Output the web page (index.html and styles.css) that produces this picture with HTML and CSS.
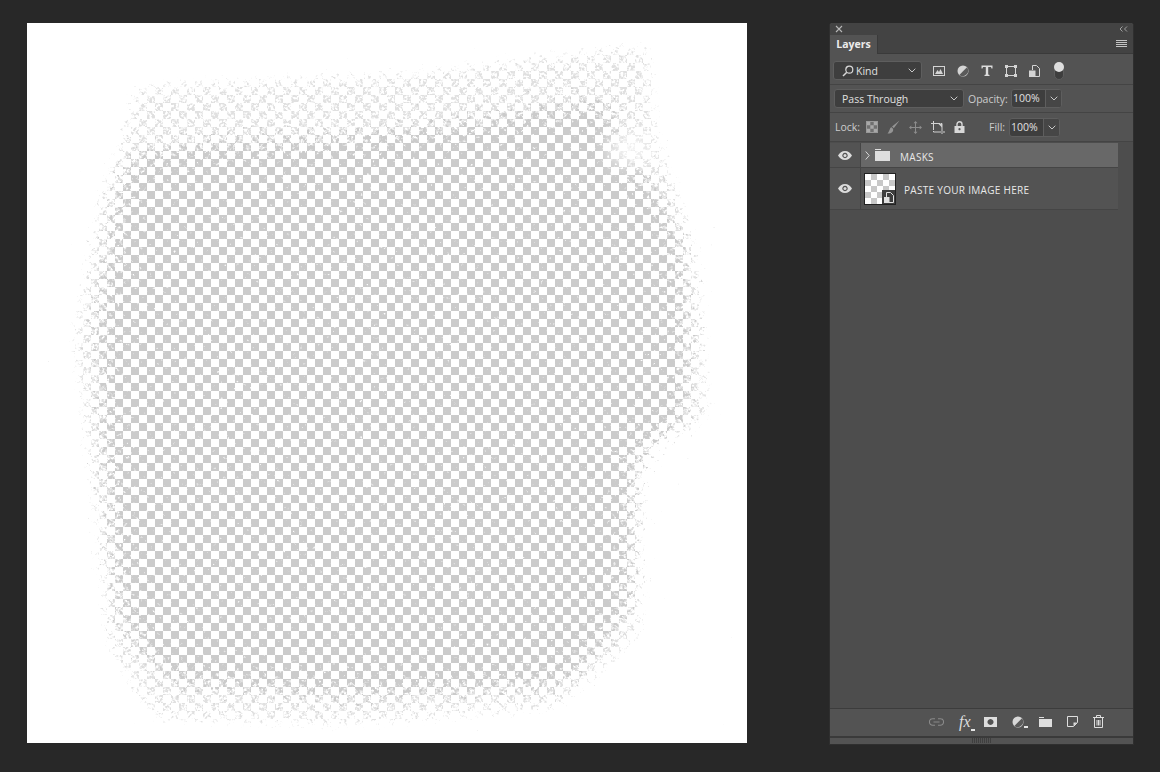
FILE: index.html
```html
<!DOCTYPE html>
<html lang="en">
<head>
    <meta charset="UTF-8">
    <title>Layers</title>
    <link rel="stylesheet" href="styles.css">
</head>
<body>

<div class="workspace">
    <svg class="artboard" width="720" height="720" viewBox="27 23 720 720">
        <defs>
            <pattern id="checker" x="27" y="23" width="16" height="16" patternUnits="userSpaceOnUse">
                <rect x="0" y="0" width="8" height="8" fill="#cbcbcb"/>
                <rect x="8" y="8" width="8" height="8" fill="#cbcbcb"/>
            </pattern>
            <filter id="rough" filterUnits="userSpaceOnUse" x="27" y="23" width="720" height="720" color-interpolation-filters="sRGB">
                <feGaussianBlur in="SourceGraphic" stdDeviation="20" result="soft"/>
                <feTurbulence type="fractalNoise" baseFrequency="0.3" numOctaves="2" seed="7"/>
                <feColorMatrix values="0 0 0 0 1  0 0 0 0 1  0 0 0 0 1  1 0 0 0 0" result="noise"/>
                <feComposite in="soft" in2="noise" operator="arithmetic" k1="0" k2="1" k3="1.4" k4="-0.95"/>
                <feComponentTransfer>
                    <feFuncA type="linear" slope="4" intercept="-1"/>
                </feComponentTransfer>
            </filter>
            <filter id="speck" filterUnits="userSpaceOnUse" x="27" y="23" width="720" height="720" color-interpolation-filters="sRGB">
                <feGaussianBlur in="SourceGraphic" stdDeviation="13" result="soft"/>
                <feTurbulence type="fractalNoise" baseFrequency="0.38" numOctaves="2" seed="21"/>
                <feColorMatrix values="0 0 0 0 1  0 0 0 0 1  0 0 0 0 1  1 0 0 0 0" result="noise"/>
                <feComposite in="soft" in2="noise" operator="arithmetic" k1="1" k2="0" k3="0" k4="0"/>
                <feComponentTransfer>
                    <feFuncA type="linear" slope="5" intercept="-1.900"/>
                </feComponentTransfer>
            </filter>
            <filter id="fade" filterUnits="userSpaceOnUse" x="27" y="23" width="720" height="720">
                <feGaussianBlur stdDeviation="9"/>
            </filter>
            <mask id="scrape" maskUnits="userSpaceOnUse" x="27" y="23" width="720" height="720">
                <polygon filter="url(#speck)" fill="#fff" opacity=".6" points="128,78 400,66 655,36 664,140 686,190 706,270 716,428 650,448 646,640 560,715 350,732 150,726 102,650 80,440 66,340 92,200 112,150"/>
                <polygon filter="url(#rough)" fill="#fff" points="112,205 128,146 400,128 618,95 618,150 660,182 686,250 692,424 636,450 632,614 566,688 350,700 165,684 118,625 102,450 94,330"/>
                <ellipse filter="url(#fade)" cx="628" cy="150" rx="20" ry="14" fill="#000" fill-opacity=".8"/>
            </mask>
        </defs>
        <rect x="27" y="23" width="720" height="720" fill="#fff"/>
        <rect x="27" y="23" width="720" height="720" fill="url(#checker)" mask="url(#scrape)"/>
    </svg>

    <div class="panel">
        <div class="panel-top">
            <svg class="top-icon" width="8" height="8" viewBox="0 0 8 8"><path d="M1 1l6 6M7 1L1 7" stroke="#b8b8b8" stroke-width="1.100" fill="none"/></svg>
            <svg class="top-icon" width="9" height="6" viewBox="0 0 9 6"><path d="M3.500 .5L1 3l2.500 2.500M8 .5L5.500 3 8 5.500" stroke="#a0a0a0" fill="none"/></svg>
        </div>
        <div class="tab-bar">
            <div class="tab">Layers</div>
            <svg class="menu-icon" width="11" height="8" viewBox="0 0 11 8"><path d="M0 .5h11M0 2.500h11M0 4.500h11M0 6.500h11" stroke="#c4c4c4"/></svg>
        </div>

        <div class="tool-row filter-row">
            <div class="select kind-select">
                <svg width="12" height="12" viewBox="0 0 12 12"><circle cx="7.300" cy="4.700" r="3.500" fill="none" stroke="#d8d8d8" stroke-width="1.200"/><path d="M4.800 7.200L1 11" stroke="#d8d8d8" stroke-width="1.500"/></svg>
                <span>Kind</span>
                <svg class="caret" width="8" height="5" viewBox="0 0 8 5"><path d="M.7 .7L4 4l3.300-3.300" fill="none" stroke="#c8c8c8"/></svg>
            </div>
            <div class="filter-icons">
                <svg width="12" height="10" viewBox="0 0 12 10"><rect x=".5" y=".5" width="11" height="9" fill="none" stroke="#d4d4d4"/><path d="M2 8l2.500-4 1.500 2 1.500-3L10 8z" fill="#d4d4d4"/></svg>
                <svg width="12" height="12" viewBox="0 0 12 12"><circle cx="6" cy="6" r="5.500" fill="#d4d4d4"/><path d="M10 2.300A5.500 5.500 0 0 1 2.300 10z" fill="#5a5a5a"/></svg>
                <svg width="12" height="11" viewBox="0 0 12 11"><path d="M.5 .5h11v3h-1L10 2H7.200v7.500l1.300.5v1h-5v-1l1.300-.5V2H2l-.5 1.500h-1z" fill="#dcdcdc"/></svg>
                <svg width="12" height="12" viewBox="0 0 12 12"><rect x="1.500" y="1.500" width="9" height="9" fill="none" stroke="#d4d4d4"/><path d="M0 0h3v3H0zM9 0h3v3H9zM0 9h3v3H0zM9 9h3v3H9z" fill="#d4d4d4"/></svg>
                <svg width="11" height="12" viewBox="0 0 11 12"><path d="M3.500 5V.5h4l3 3v8H5" fill="none" stroke="#d4d4d4"/><rect x="0" y="5.500" width="6.500" height="6.500" fill="#d4d4d4"/></svg>
            </div>
            <div class="switch"><div class="switch-dot"></div></div>
        </div>

        <div class="tool-row blend-row">
            <div class="select blend-select">
                <span>Pass Through</span>
                <svg class="caret" width="8" height="5" viewBox="0 0 8 5"><path d="M.7 .7L4 4l3.300-3.300" fill="none" stroke="#c8c8c8"/></svg>
            </div>
            <label class="field-label opacity-label">Opacity:</label>
            <div class="number-field">
                <span class="number">100%</span>
                <span class="number-btn"><svg width="8" height="5" viewBox="0 0 8 5"><path d="M.7 .7L4 4l3.300-3.300" fill="none" stroke="#c8c8c8"/></svg></span>
            </div>
        </div>

        <div class="tool-row lock-row">
            <label class="field-label lock-label">Lock:</label>
            <div class="lock-icons">
                <svg width="12" height="12" viewBox="0 0 12 12"><rect x=".5" y=".5" width="11" height="11" fill="#707070" stroke="#999"/><path d="M1 1h3.300v3.300H1zM7.700 1H11v3.300H7.700zM4.300 4.300h3.400v3.400H4.300zM1 7.700h3.300V11H1zM7.700 7.700H11V11H7.700z" fill="#a8a8a8"/></svg>
                <svg width="13" height="14" viewBox="0 0 13 14"><path d="M12.500 .5L5 6.500l1.800 1.800zM4.500 7.200c-2 .3-1.300 3.300-4 6.300 3.500 .3 6.500-1.500 5.500-4.800z" fill="#949494"/></svg>
                <svg width="13" height="13" viewBox="0 0 13 13"><path d="M6.500 1v11M1 6.500h11" stroke="#8d8d8d"/><path d="M6.500 0l2 2.300h-4zM6.500 13l2-2.300h-4zM0 6.500l2.300-2v4zM13 6.500l-2.300-2v4z" fill="#8d8d8d"/></svg>
                <svg width="14" height="13" viewBox="0 0 14 13"><path d="M2.500 0v11H14M0 2.500h11V13" fill="none" stroke="#d2d2d2" stroke-dasharray="9 1"/><path d="M7 2.500h4v4z" fill="#d2d2d2"/></svg>
                <svg width="11" height="12" viewBox="0 0 11 12"><path d="M3 5V3.300a2.500 2.500 0 0 1 5 0V5" fill="none" stroke="#d8d8d8" stroke-width="1.400"/><path fill-rule="evenodd" d="M.5 5h10v7H.5zM5.500 7a1.100 1.100 0 1 0 .01 0z" fill="#d8d8d8"/></svg>
            </div>
            <label class="field-label fill-label">Fill:</label>
            <div class="number-field">
                <span class="number">100%</span>
                <span class="number-btn"><svg width="8" height="5" viewBox="0 0 8 5"><path d="M.7 .7L4 4l3.300-3.300" fill="none" stroke="#c8c8c8"/></svg></span>
            </div>
        </div>

        <div class="layer-list">
            <div class="layer group-layer">
                <div class="eye-cell">
                    <svg width="14" height="9" viewBox="0 0 14 9"><path fill-rule="evenodd" d="M7 0c3 0 5.500 2 7 4.500C12.500 7 10 9 7 9S1.500 7 0 4.500C1.500 2 4 0 7 0zm0 1.800a2.700 2.700 0 1 0 .01 0z" fill="#dcdcdc"/><circle cx="7" cy="4.500" r="1.500" fill="#dcdcdc"/></svg>
                </div>
                <div class="layer-body group-body">
                    <svg class="twisty" width="5" height="9" viewBox="0 0 5 9"><path d="M.7 .5l3.500 4-3.500 4" fill="none" stroke="#dadada"/></svg>
                    <svg class="folder" width="15" height="12" viewBox="0 0 15 12"><path d="M0 0h6v1H0zM0 2h15v10H0z" fill="#dedede"/></svg>
                    <span class="layer-name">MASKS</span>
                </div>
            </div>
            <div class="layer image-layer">
                <div class="eye-cell">
                    <svg width="14" height="9" viewBox="0 0 14 9"><path fill-rule="evenodd" d="M7 0c3 0 5.500 2 7 4.500C12.500 7 10 9 7 9S1.500 7 0 4.500C1.500 2 4 0 7 0zm0 1.800a2.700 2.700 0 1 0 .01 0z" fill="#dcdcdc"/><circle cx="7" cy="4.500" r="1.500" fill="#dcdcdc"/></svg>
                </div>
                <div class="layer-body">
                    <div class="thumb">
                        <div class="smart-badge">
                            <svg width="10" height="11" viewBox="0 0 10 11"><path d="M2.500 5V.5h4l3 3V10.500H5" fill="none" stroke="#e0e0e0"/><rect x="0" y="5" width="5.500" height="6" fill="#e0e0e0"/></svg>
                        </div>
                    </div>
                    <span class="layer-name image-name">PASTE YOUR IMAGE HERE</span>
                </div>
            </div>
        </div>

        <div class="panel-footer">
            <svg width="15" height="8" viewBox="0 0 15 8"><path d="M6 .7H3.700a3.300 3.300 0 0 0 0 6.600H6M9 .7h2.300a3.300 3.300 0 0 1 0 6.600H9M4.500 4h6" fill="none" stroke="#8a8a8a" stroke-width="1.100"/></svg>
            <span class="fx">fx<i class="tick"></i></span>
            <svg width="13" height="10" viewBox="0 0 13 10"><path fill-rule="evenodd" d="M0 0h13v10H0zM6.500 2a3 3 0 1 0 .01 0z" fill="#dedede"/></svg>
            <span class="adjust">
                <svg width="12" height="12" viewBox="0 0 12 12"><circle cx="6" cy="6" r="5.500" fill="#d8d8d8"/><path d="M10 2.300A5.500 5.500 0 0 1 2.300 10z" fill="#5a5a5a"/></svg>
                <i class="tick"></i>
            </span>
            <svg width="13" height="10" viewBox="0 0 13 10"><path d="M0 0h5v1H0zM0 2h13v8H0z" fill="#dedede"/></svg>
            <svg width="11" height="11" viewBox="0 0 11 11"><path d="M.5 .5h10v6l-4 4H.5z" fill="none" stroke="#dedede"/><path d="M10 6.500H6.500V10z" fill="#dedede"/></svg>
            <svg width="11" height="13" viewBox="0 0 11 13"><path d="M0 2.500h11M3.500 2.500V.5h4v2M1.500 2.500v10h8v-10M4 5v5.500M5.500 5v5.500M7 5v5.500" fill="none" stroke="#dedede"/></svg>
        </div>
        <div class="panel-grip"><div class="grip-lines"></div></div>
    </div>
</div>

</body>
</html>
```

FILE: styles.css
```css
body {
    margin: 0;
    background-color: #282828;
    font-family: "Open Sans", "Noto Sans", sans-serif;
    color: #e0e0e0;
}
.workspace {
    display: flex;
    align-items: flex-start;
    width: 1160px;
    height: 772px;
    padding: 23px 0 0 27px;
    box-sizing: border-box;
    overflow: hidden;
}
.artboard {
    display: block;
    flex: none;
}
.panel {
    display: flex;
    flex-direction: column;
    flex: none;
    width: 303px;
    height: 721px;
    margin-left: 82px;
    background-color: #535353;
    border: 1px solid #2f2f2f;
    border-top: none;
    border-radius: 3px 3px 0 0;
}
.panel-top {
    display: flex;
    justify-content: space-between;
    align-items: center;
    height: 12px;
    padding: 0 5px;
    background-color: #434343;
    border-radius: 3px 3px 0 0;
}
.top-icon {
    display: block;
}
.tab-bar {
    display: flex;
    justify-content: space-between;
    align-items: center;
    height: 18px;
    padding-right: 6px;
    background-color: #434343;
    border-bottom: 1px solid #3a3a3a;
}
.tab {
    width: 48px;
    height: 19px;
    margin-bottom: -1px;
    background-color: #535353;
    border-right: 1px solid #3a3a3a;
    box-sizing: border-box;
    font-size: 10.500px;
    font-weight: 700;
    line-height: 18px;
    text-align: center;
    color: #ececec;
}
.menu-icon {
    display: block;
}
.tool-row {
    display: flex;
    align-items: center;
    border-bottom: 1px solid #444;
    flex: none;
}
.filter-row {
    height: 27px;
    padding: 3px 0 0 3px;
}
.blend-row {
    height: 27px;
    padding-left: 4px;
}
.lock-row {
    height: 28px;
    padding-left: 5px;
}
.select {
    display: flex;
    align-items: center;
    height: 19px;
    background-color: #3e3e3e;
    border: 1px solid #5e5e5e;
    border-radius: 3px;
    box-sizing: border-box;
    font-size: 10.500px;
    color: #e0e0e0;
}
.kind-select {
    width: 89px;
    padding-left: 8px;
    gap: 2px;
}
.blend-select {
    width: 130px;
    padding-left: 7px;
}
.caret {
    margin-left: auto;
    margin-right: 5px;
}
.filter-icons {
    display: flex;
    align-items: center;
    gap: 12px;
    margin-left: 11px;
}
.filter-icons svg {
    display: block;
}
.switch {
    position: relative;
    width: 10px;
    height: 18px;
    margin-left: 14px;
    background-color: #3e3e3e;
    border: 1px solid #5e5e5e;
    border-radius: 5px;
    box-sizing: border-box;
}
.switch-dot {
    position: absolute;
    left: -1px;
    top: -1px;
    width: 10px;
    height: 10px;
    background-color: #dedede;
    border-radius: 50%;
}
.field-label {
    font-size: 10.500px;
    color: #cccccc;
}
.opacity-label {
    margin-left: 4px;
    width: 43px;
}
.lock-label {
    width: 31px;
}
.fill-label {
    margin-left: 24px;
    width: 20px;
}
.number-field {
    display: flex;
    width: 51px;
    height: 19px;
    background-color: #3e3e3e;
    border: 1px solid #5e5e5e;
    border-radius: 3px;
    box-sizing: border-box;
    font-size: 10.500px;
    line-height: 17px;
}
.number {
    flex: 1;
    padding-left: 1px;
    color: #e0e0e0;
}
.number-btn {
    display: flex;
    align-items: center;
    justify-content: center;
    width: 15px;
    background-color: #464646;
    border-left: 1px solid #5e5e5e;
    border-radius: 0 2px 2px 0;
}
.lock-icons {
    display: flex;
    align-items: center;
    gap: 9px;
}
.lock-icons svg {
    display: block;
}
.layer-list {
    flex: 1;
    background-color: #4d4d4d;
    padding-top: 1px;
}
.layer {
    display: flex;
    background-color: #535353;
    border-bottom: 1px solid #454545;
    margin-right: 15px;
}
.group-layer {
    height: 25px;
    box-sizing: border-box;
}
.image-layer {
    height: 42px;
    box-sizing: border-box;
}
.eye-cell {
    display: flex;
    align-items: center;
    justify-content: center;
    width: 30px;
    flex: none;
    border-right: 1px solid #454545;
}
.layer-body {
    display: flex;
    align-items: center;
    flex: 1;
}
.group-body {
    background-color: #686868;
}
.twisty {
    margin-left: 4px;
}
.folder {
    margin-left: 5px;
}
.layer-name {
    margin-left: 10px;
    font-size: 10px;
    letter-spacing: .3px;
    color: #e8e8e8;
}
.group-body .layer-name {
    margin-top: 3px;
}
.image-name {
    margin: 3px 0 0 8px;
}
.thumb {
    position: relative;
    width: 32px;
    height: 32px;
    margin: 1px 0 0 3px;
    border: 1px solid #222;
    box-sizing: border-box;
    background-color: #fff;
    background-image: conic-gradient(#c8c8c8 25%, #fff 0 50%, #c8c8c8 0 75%, #fff 0);
    background-size: 12px 12px;
}
.smart-badge {
    position: absolute;
    right: 0;
    bottom: 0;
    display: flex;
    align-items: center;
    justify-content: center;
    width: 13px;
    height: 14px;
    background-color: #3d3d3d;
}
.panel-footer {
    display: flex;
    align-items: center;
    height: 25px;
    padding: 0 0 2px 99px;
    gap: 15px;
    border-top: 1px solid #3c3c3c;
    border-bottom: 2px solid #3a3a3a;
    flex: none;
}
.panel-footer svg {
    display: block;
}
.fx {
    position: relative;
    margin-right: -2px;
    font-family: "Liberation Serif", serif;
    font-style: italic;
    font-size: 16px;
    color: #dedede;
}
.adjust {
    position: relative;
    display: block;
}
.tick {
    position: absolute;
    right: -4px;
    bottom: 0;
    width: 4px;
    height: 1.500px;
    background-color: #e6e6e6;
}
.panel-grip {
    display: flex;
    justify-content: center;
    height: 6px;
    flex: none;
}
.grip-lines {
    width: 20px;
    height: 5px;
    background-image: repeating-linear-gradient(90deg, #3f3f3f 0 1px, transparent 1px 2px);
}
```
